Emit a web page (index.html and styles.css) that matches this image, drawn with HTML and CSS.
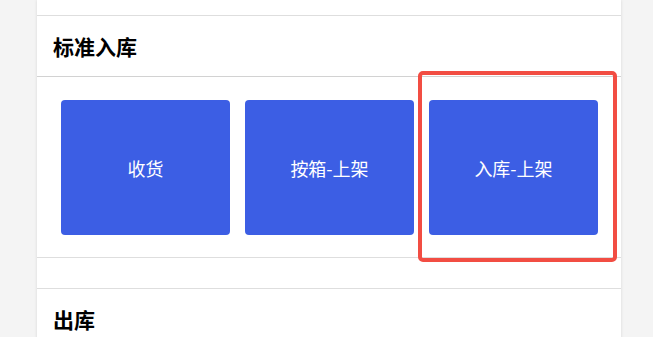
FILE: index.html
```html
<!DOCTYPE html>
<html lang="zh">
<head>
<meta charset="utf-8">
<link rel="stylesheet" href="styles.css">
</head>
<body>
<div class="page">
  <div class="prev"></div>
  <section class="card">
    <div class="card-head">标准入库</div>
    <div class="card-body">
      <button class="tile">收货</button>
      <button class="tile">按箱-上架</button>
      <button class="tile">入库-上架</button>
    </div>
    <div class="highlight"></div>
  </section>
  <div class="spacer"></div>
  <section class="card">
    <div class="card-head">出库</div>
  </section>
</div>
</body>
</html>
```
FILE: styles.css
```css
html, body {
  margin: 0;
  padding: 0;
  background: #f4f4f4;
  height: 100%;
  overflow: hidden;
}
body {
  font-family: "Noto Sans CJK SC", "Noto Sans", sans-serif;
}
.page {
  margin-left: 37px;
  width: 584px;
  background: #fff;
  min-height: 100%;
  box-shadow: 0 0 3px rgba(0,0,0,0.12);
}
.prev {
  height: 15px;
  border-bottom: 1px solid #dedede;
}
.card {
  position: relative;
  background: #fff;
}
.card-head {
  height: 60px;
  display: flex;
  align-items: center;
  padding-left: 16px;
  font-size: 21px;
  font-weight: bold;
  color: #000;
  border-bottom: 1px solid #d2d2d2;
}
.card-body {
  display: flex;
  gap: 15px;
  padding: 23px 23px 22px 24px;
  border-bottom: 1px solid #dedede;
}
.tile {
  width: 169px;
  height: 135px;
  border: none;
  border-radius: 4px;
  background: #3c5ee4;
  color: #fff;
  font-family: "Noto Sans CJK SC", "Noto Sans", sans-serif;
  font-size: 18px;
  padding: 0;
}
.spacer {
  height: 30px;
  border-bottom: 1px solid #dedede;
}
.highlight {
  position: absolute;
  left: 381px;
  top: 55px;
  width: 191px;
  height: 183px;
  border: 4px solid #f24d43;
  border-radius: 5px;
}
```
